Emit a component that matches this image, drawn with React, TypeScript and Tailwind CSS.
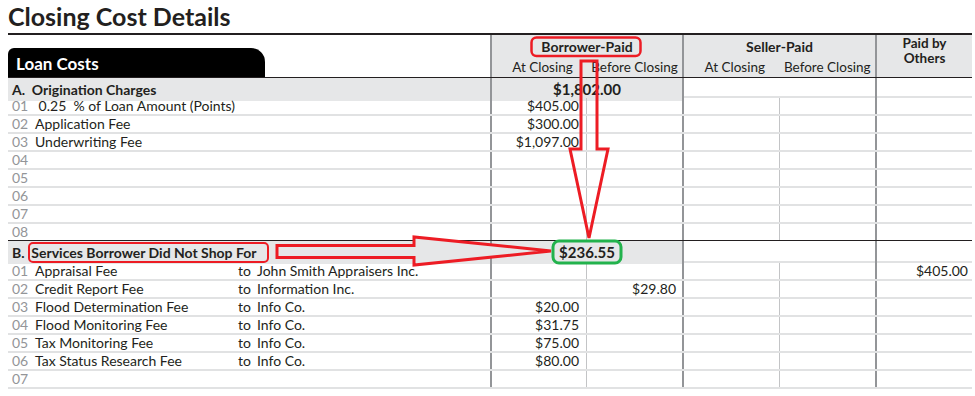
const cols = "grid grid-cols-[482px_96px_96px_97px_96px_97px]";

type Item = {
  num: string;
  label?: string;
  to?: string;
  amounts?: (string | undefined)[];
};

const sectionA: Item[] = [
  { num: "01", label: " 0.25  % of Loan Amount (Points)", amounts: ["$405.00"] },
  { num: "02", label: "Application Fee", amounts: ["$300.00"] },
  { num: "03", label: "Underwriting Fee", amounts: ["$1,097.00"] },
  { num: "04" },
  { num: "05" },
  { num: "06" },
  { num: "07" },
  { num: "08" },
];

const sectionB: Item[] = [
  {
    num: "01",
    label: "Appraisal Fee",
    to: "John Smith Appraisers Inc.",
    amounts: [undefined, undefined, undefined, undefined, "$405.00"],
  },
  {
    num: "02",
    label: "Credit Report Fee",
    to: "Information Inc.",
    amounts: [undefined, "$29.80"],
  },
  { num: "03", label: "Flood Determination Fee", to: "Info Co.", amounts: ["$20.00"] },
  { num: "04", label: "Flood Monitoring Fee", to: "Info Co.", amounts: ["$31.75"] },
  { num: "05", label: "Tax Monitoring Fee", to: "Info Co.", amounts: ["$75.00"] },
  { num: "06", label: "Tax Status Research Fee", to: "Info Co.", amounts: ["$80.00"] },
  { num: "07" },
];

function ItemRow({ item, last }: { item: Item; last?: boolean }) {
  const a = item.amounts ?? [];
  return (
    <div
      className={`${cols} ${last ? "h-[17px] border-b border-[#231f20]" : "h-[18px] border-b-2 border-[#e1e2e3]"} text-[14px] leading-[16px]`}
    >
      <div className="flex items-center pl-1 whitespace-pre">
        <span className="w-[23px] text-[#939598]">{item.num}</span>
        {item.to ? (
          <>
            <span className="w-[203px]">{item.label}</span>
            <span className="w-[19px]">to</span>
            <span>{item.to}</span>
          </>
        ) : (
          <span>{item.label}</span>
        )}
      </div>
      <div className="border-l-2 border-[#939598] pr-[7px] text-right">{a[0]}</div>
      <div className="border-l border-[#c3c4c6] pr-[6px] text-right">{a[1]}</div>
      <div className="border-l-2 border-[#939598] pr-[6px] text-right">{a[2]}</div>
      <div className="border-l border-[#c3c4c6] pr-[6px] text-right">{a[3]}</div>
      <div className="border-l-2 border-[#939598] pr-[4px] text-right">{a[4]}</div>
    </div>
  );
}

function SectionRow({
  title,
  total,
  className,
}: {
  title: string;
  total: string;
  className: string;
}) {
  return (
    <div className={`${cols} ${className} border-b-2 border-[#e1e2e3] text-[14px] font-bold`}>
      <div className="flex items-center bg-[#e6e7e8] pl-1 whitespace-pre">{title}</div>
      <div className="col-span-2 flex items-center justify-center border-l-2 border-[#939598] bg-[#e6e7e8] text-[15px]">
        {total}
      </div>
      <div className="col-span-2 border-l-2 border-[#939598]" />
      <div className="border-l-2 border-[#939598]" />
    </div>
  );
}

function Header() {
  return (
    <div className={`${cols} h-[43px] border-b border-[#231f20]`}>
      <div className="flex items-end">
        <div className="flex h-[29px] w-[257px] items-center rounded-tl-[6px] rounded-tr-[14px] bg-black pl-2 pt-[2px] text-[17px] font-bold text-white">
          Loan Costs
        </div>
      </div>
      <div className="col-span-2 flex flex-col border-l-2 border-[#939598] bg-[#e6e7e8]">
        <div className="pt-[2px] text-center text-[14px] leading-[19px] font-bold">
          Borrower-Paid
        </div>
        <div className="grid grid-cols-2 pt-[2px] text-[13.5px] leading-[18px]">
          <span className="pl-[6px] text-center">At Closing</span>
          <span className="text-center">Before Closing</span>
        </div>
      </div>
      <div className="col-span-2 flex flex-col border-l-2 border-[#939598] bg-[#e6e7e8]">
        <div className="pt-[2px] text-center text-[14px] leading-[19px] font-bold">
          Seller-Paid
        </div>
        <div className="grid grid-cols-2 pt-[2px] text-[13.5px] leading-[18px]">
          <span className="pl-[6px] text-center">At Closing</span>
          <span className="text-center">Before Closing</span>
        </div>
      </div>
      <div className="flex flex-col border-l-2 border-[#939598] bg-[#e6e7e8] pt-[1px] text-center text-[13.5px] leading-[15px] font-bold">
        <span>Paid by</span>
        <span>Others</span>
      </div>
    </div>
  );
}

function Annotations() {
  return (
    <svg
      className="pointer-events-none absolute top-0 left-0"
      width="975"
      height="396"
      viewBox="0 0 975 396"
      fill="none"
    >
      <rect x="531.5" y="37.5" width="109" height="18.5" rx="5" stroke="#ed1c24" strokeWidth="2.5" />
      <rect x="29" y="243" width="239" height="19" rx="4" stroke="#ed1c24" strokeWidth="2" />
      <polygon
        points="581,61 597,61 597,149 608,149 589,238 570,149 581,149"
        stroke="#ed1c24"
        strokeWidth="3"
        strokeLinejoin="miter"
      />
      <polygon
        points="277,245.5 414,245.5 414,237 551,251 414,265 414,257.5 277,257.5"
        fill="#e6e7e8"
        stroke="#ed1c24"
        strokeWidth="3"
      />
      <rect x="553" y="241" width="68" height="22" rx="6" stroke="#22b24c" strokeWidth="3" />
    </svg>
  );
}

export default function App() {
  return (
    <div className="relative h-[396px] w-[975px] overflow-hidden bg-white font-['Lato',sans-serif] text-[#231f20]">
      <div className="ml-2 w-[964px]">
        <h1 className="h-[33px] text-[25px] leading-[32px] font-bold">Closing Cost Details</h1>
        <div className="h-[2px] bg-[#231f20]" />
        <Header />
        <SectionRow title="A.  Origination Charges" total="$1,802.00" className="h-[20px]" />
        {sectionA.map((item, i) => (
          <ItemRow key={item.num} item={item} last={i === sectionA.length - 1} />
        ))}
        <SectionRow
          title="B.  Services Borrower Did Not Shop For"
          total="$236.55"
          className="h-[22px]"
        />
        {sectionB.map((item) => (
          <ItemRow key={item.num} item={item} />
        ))}
      </div>
      <Annotations />
    </div>
  );
}
